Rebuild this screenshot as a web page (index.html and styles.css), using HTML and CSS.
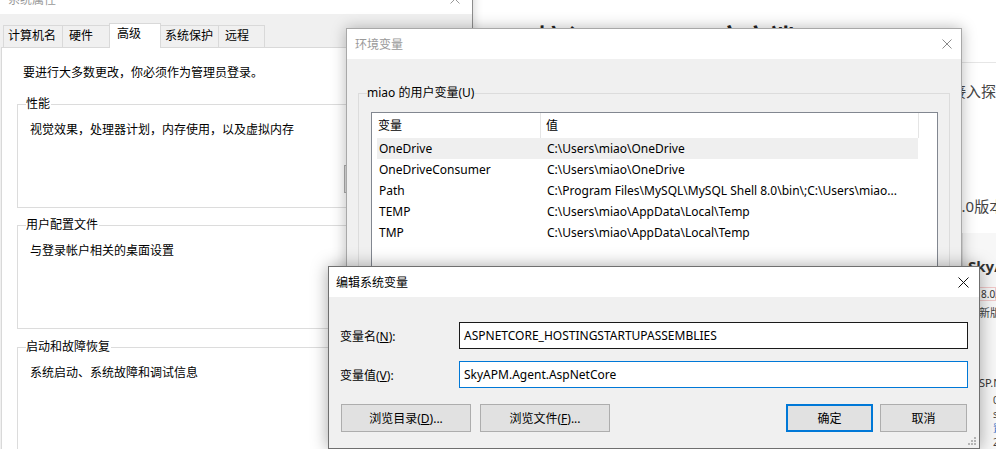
FILE: index.html
```html
<!DOCTYPE html>
<html lang="zh-CN">
<head>
<meta charset="utf-8">
<title>环境变量</title>
<link rel="stylesheet" href="styles.css">
</head>
<body>
<div class="web">
  <h1 class="web-title">接入 .net core 客户端</h1>
  <div class="web-rule"></div>
  <p class="web-p web-p1">通过设置环境变量的方式，无需修改任何代码即可在应用程序中直接接入探针</p>
  <p class="web-p web-p2">服务端使用的是最新版本，客户端也同样需要使用对应的版本，即为8.0版本</p>
  <div class="shot">
    <div class="shot-name">SkyAPM.Agent.AspNetCore</div>
    <div class="shot-ver">8.0.0</div>
    <div class="shot-new">新版本可用</div>
    <div class="shot-desc">ASP.NET Core</div>
    <div class="shot-list">
      <div>0.9.0</div>
      <div>src</div>
      <div class="shot-blue">置顶</div>
      <div>2020</div>
    </div>
  </div>
</div>

<div class="sys">
  <div class="sys-title">
    <span>系统属性</span>
    <svg class="x-icon" width="10" height="10" viewBox="0 0 10 10"><path d="M0.5 0.5L9.5 9.5M9.5 0.5L0.5 9.5" stroke="#999" stroke-width="1" fill="none"/></svg>
  </div>
  <div class="sys-body">
    <div class="tabs">
      <div class="tab t1">计算机名</div>
      <div class="tab t2">硬件</div>
      <div class="tab t3 sel">高级</div>
      <div class="tab t4">系统保护</div>
      <div class="tab t5">远程</div>
    </div>
    <div class="panel">
      <div class="intro">要进行大多数更改，你必须作为管理员登录。</div>
      <fieldset class="grp g1">
        <legend>性能</legend>
        <div class="grp-text">视觉效果，处理器计划，内存使用，以及虚拟内存</div>
        <div class="grp-btnrow"><button class="btn set-btn">设置(S)...</button></div>
      </fieldset>
      <fieldset class="grp g2">
        <legend>用户配置文件</legend>
        <div class="grp-text">与登录帐户相关的桌面设置</div>
        <div class="grp-btnrow"><button class="btn set-btn">设置(E)...</button></div>
      </fieldset>
      <fieldset class="grp g3">
        <legend>启动和故障恢复</legend>
        <div class="grp-text">系统启动、系统故障和调试信息</div>
      </fieldset>
    </div>
  </div>
</div>

<div class="env">
  <div class="env-title">
    <span>环境变量</span>
    <svg class="x-icon" width="10" height="10" viewBox="0 0 10 10"><path d="M0.5 0.5L9.5 9.5M9.5 0.5L0.5 9.5" stroke="#8a8a8a" stroke-width="1" fill="none"/></svg>
  </div>
  <fieldset class="env-grp">
    <legend>miao 的用户变量(U)</legend>
    <div class="list">
      <div class="list-head">
        <div class="hcell h1c">变量</div>
        <div class="hcell h2c">值</div>
      </div>
      <div class="row hl"><span>OneDrive</span><span>C:\Users\miao\OneDrive</span></div>
      <div class="row"><span>OneDriveConsumer</span><span>C:\Users\miao\OneDrive</span></div>
      <div class="row"><span>Path</span><span>C:\Program Files\MySQL\MySQL Shell 8.0\bin\;C:\Users\miao...</span></div>
      <div class="row"><span>TEMP</span><span>C:\Users\miao\AppData\Local\Temp</span></div>
      <div class="row"><span>TMP</span><span>C:\Users\miao\AppData\Local\Temp</span></div>
    </div>
  </fieldset>
</div>

<div class="edit">
  <div class="edit-title">
    <span>编辑系统变量</span>
    <svg class="x-icon" width="11" height="11" viewBox="0 0 11 11"><path d="M0.5 0.5L10.5 10.5M10.5 0.5L0.5 10.5" stroke="#111" stroke-width="1" fill="none"/></svg>
  </div>
  <div class="edit-body">
    <div class="field f1">
      <span class="lbl">变量名(<span class="u">N</span>):</span>
      <div class="inp">ASPNETCORE_HOSTINGSTARTUPASSEMBLIES</div>
    </div>
    <div class="field f2">
      <span class="lbl">变量值(<span class="u">V</span>):</span>
      <div class="inp focus">SkyAPM.Agent.AspNetCore</div>
    </div>
    <div class="btnrow">
      <button class="btn wide">浏览目录(<span class="u">D</span>)...</button>
      <button class="btn wide">浏览文件(<span class="u">F</span>)...</button>
      <button class="btn narrow ok">确定</button>
      <button class="btn narrow">取消</button>
    </div>
  </div>
  <svg class="grip" width="9" height="9" viewBox="0 0 9 9">
    <rect x="6" y="0" width="2" height="2" fill="#b4b4b4"/>
    <rect x="3" y="3" width="2" height="2" fill="#b4b4b4"/>
    <rect x="6" y="3" width="2" height="2" fill="#b4b4b4"/>
    <rect x="0" y="6" width="2" height="2" fill="#b4b4b4"/>
    <rect x="3" y="6" width="2" height="2" fill="#b4b4b4"/>
    <rect x="6" y="6" width="2" height="2" fill="#b4b4b4"/>
  </svg>
</div>
</body>
</html>
```

FILE: styles.css
```css
* { box-sizing: border-box; }
html, body { margin: 0; padding: 0; }
body {
  width: 996px;
  height: 449px;
  overflow: hidden;
  position: relative;
  background: #fff;
  font-family: "Noto Sans", "Noto Sans CJK SC", sans-serif;
  font-size: 12px;
  color: #000;
}
.u { text-decoration: underline; }

/* ---------- web page behind ---------- */
.web {
  position: absolute;
  left: 0;
  top: 0;
  width: 996px;
  height: 449px;
  padding-left: 501px;
  color: #333;
  overflow: hidden;
}
.web-title {
  margin: 0;
  padding-top: 20px;
  padding-left: 36px;
  font-size: 26px;
  font-weight: 700;
  line-height: 36px;
  color: #222;
  white-space: nowrap;
}
.web-rule {
  margin-top: 6px;
  border-top: 1px solid #e6e6e6;
}
.web-p {
  margin: 0;
  font-size: 15px;
  line-height: 24px;
  white-space: nowrap;
  color: #444;
}
.web-p1 { margin-top: 16px; }
.web-p2 { margin-top: 91px; padding-left: 2px; }
.shot {
  margin-top: 15px;
  margin-left: 461px;
  height: 216px;
  background: #f7f7f7;
  border-left: 1px solid #e2e2e2;
  padding-left: 5px;
  white-space: nowrap;
  overflow: hidden;
}
.shot-name {
  margin-top: 23px;
  font-size: 15px;
  font-weight: 700;
  line-height: 20px;
  color: #333;
}
.shot-ver {
  margin-top: 11px;
  margin-left: 10px;
  height: 14px;
  border: 1px solid #f0c8c8;
  font-size: 10px;
  line-height: 12px;
  padding-left: 2px;
  color: #333;
}
.shot-new {
  margin-top: 4px;
  margin-left: 11px;
  font-size: 11px;
  line-height: 16px;
  color: #444;
}
.shot-desc {
  margin-top: 54px;
  margin-left: 4px;
  font-size: 11px;
  line-height: 16px;
  color: #333;
}
.shot-list {
  margin-top: 2px;
  margin-left: 25px;
  font-size: 10px;
  line-height: 14px;
  color: #444;
}
.shot-blue { color: #2a6ec8; }

/* ---------- system properties ---------- */
.sys {
  position: absolute;
  left: 0;
  top: -16px;
  width: 473px;
  height: 470px;
  background: #f0f0f0;
  border-right: 1px solid #8c8c8c;
  box-shadow: 0 0 10px rgba(0, 0, 0, 0.2);
}
.sys-title {
  height: 30px;
  background: #fff;
  color: #999;
  display: flex;
  align-items: center;
  justify-content: space-between;
  padding: 0 12px 0 8px;
}
.x-icon { display: block; }
.sys-body { padding: 9px 0 0 1px; }
.tabs {
  display: flex;
  align-items: flex-end;
  height: 24px;
  padding-left: 3px;
}
.tab {
  height: 22px;
  margin-left: -1px;
  border: 1px solid #d9d9d9;
  border-bottom: 0;
  background: #f0f0f0;
  line-height: 20px;
  white-space: nowrap;
}
.tab.sel {
  height: 25px;
  margin-bottom: -1px;
  background: #fff;
  position: relative;
  z-index: 1;
  line-height: 20px;
}
.t1 { width: 60px; padding-left: 4px; }
.t2 { width: 48px; padding-left: 6px; }
.t3 { width: 52px; padding-left: 7px; }
.t4 { width: 59px; padding-left: 4px; }
.t5 { width: 47px; padding-left: 6px; }
.panel {
  height: 420px;
  background: #fff;
  border-top: 1px solid #d9d9d9;
  border-left: 1px solid #d9d9d9;
  padding: 16px 0 0 15px;
}
.intro {
  line-height: 18px;
  padding-left: 6px;
}
.grp {
  margin: 13px 0 0 0;
  width: 438px;
  padding: 0 10px 0 8px;
  border: 1px solid #dcdcdc;
  min-width: 0;
}
.grp legend {
  padding: 0 1px 0 0;
  line-height: 18px;
}
.g1 { height: 113px; }
.g2 { height: 113px; margin-top: 8px; }
.g3 { height: 130px; margin-top: 9px; }
.grp-text {
  margin-top: 8px;
  padding-left: 4px;
  line-height: 18px;
}
.grp-btnrow {
  display: flex;
  justify-content: flex-end;
  margin-top: 26px;
}
.set-btn { width: 100px; height: 27px; }

/* ---------- environment variables ---------- */
.env {
  position: absolute;
  left: 346px;
  top: 28px;
  width: 616px;
  height: 420px;
  background: #f0f0f0;
  border: 1px solid #a8a8a8;
  box-shadow: 0 0 14px rgba(0, 0, 0, 0.28);
}
.env-title {
  height: 30px;
  background: #fff;
  color: #999;
  display: flex;
  align-items: center;
  justify-content: space-between;
  padding: 0 9px 0 8px;
}
.env-grp {
  margin: 25px 0 0 11px;
  width: 592px;
  height: 300px;
  padding: 0 0 0 8px;
  border: 1px solid #dcdcdc;
  min-width: 0;
}
.env-grp legend {
  padding: 0 1px 0 0;
  line-height: 18px;
}
.list {
  margin: 10px 0 0 4px;
  width: 567px;
  height: 260px;
  background: #fff;
  border: 1px solid #828790;
}
.list-head {
  display: flex;
  height: 25px;
}
.hcell {
  border-right: 1px solid #e5e5e5;
  line-height: 25px;
  white-space: nowrap;
}
.h1c { width: 169px; padding-left: 6px; }
.h2c { width: 378px; padding-left: 5px; }
.row {
  margin-left: 5px;
  width: 541px;
  height: 21px;
  display: grid;
  grid-template-columns: 168px 1fr;
  line-height: 21px;
  white-space: nowrap;
}
.row span { padding-left: 2px; overflow: hidden; }
.row.hl { background: #efefef; }

/* ---------- edit dialog ---------- */
.edit {
  position: absolute;
  left: 328px;
  top: 266px;
  width: 652px;
  height: 183px;
  background: #f0f0f0;
  border: 1px solid #6f6f6f;
  box-shadow: 0 0 16px rgba(0, 0, 0, 0.35);
}
.edit-title {
  height: 30px;
  background: #fff;
  display: flex;
  align-items: center;
  justify-content: space-between;
  padding: 0 10px 0 7px;
}
.edit-body { padding: 0 11px 0 11px; }
.field {
  display: flex;
  align-items: center;
}
.f1 { margin-top: 25px; }
.f2 { margin-top: 12px; }
.lbl { width: 119px; white-space: nowrap; }
.inp {
  width: 509px;
  height: 27px;
  border: 1px solid #1a1a1a;
  background: #fff;
  padding-left: 4px;
  line-height: 25px;
  white-space: nowrap;
}
.inp.focus { border-color: #0078d7; }
.btnrow {
  display: flex;
  margin-top: 16px;
}
.btn {
  height: 28px;
  background: #e1e1e1;
  border: 1px solid #adadad;
  font-family: inherit;
  font-size: 12px;
  color: #000;
  padding: 0;
  white-space: nowrap;
}
.wide { width: 130px; margin-left: 1px; }
.wide + .wide { margin-left: 9px; }
.narrow { width: 87px; }
.ok {
  margin-left: auto;
  border: 2px solid #0078d7;
}
.ok + .narrow { margin-left: 7px; margin-right: 1px; }
.grip {
  position: absolute;
  right: 2px;
  bottom: 2px;
}
```
